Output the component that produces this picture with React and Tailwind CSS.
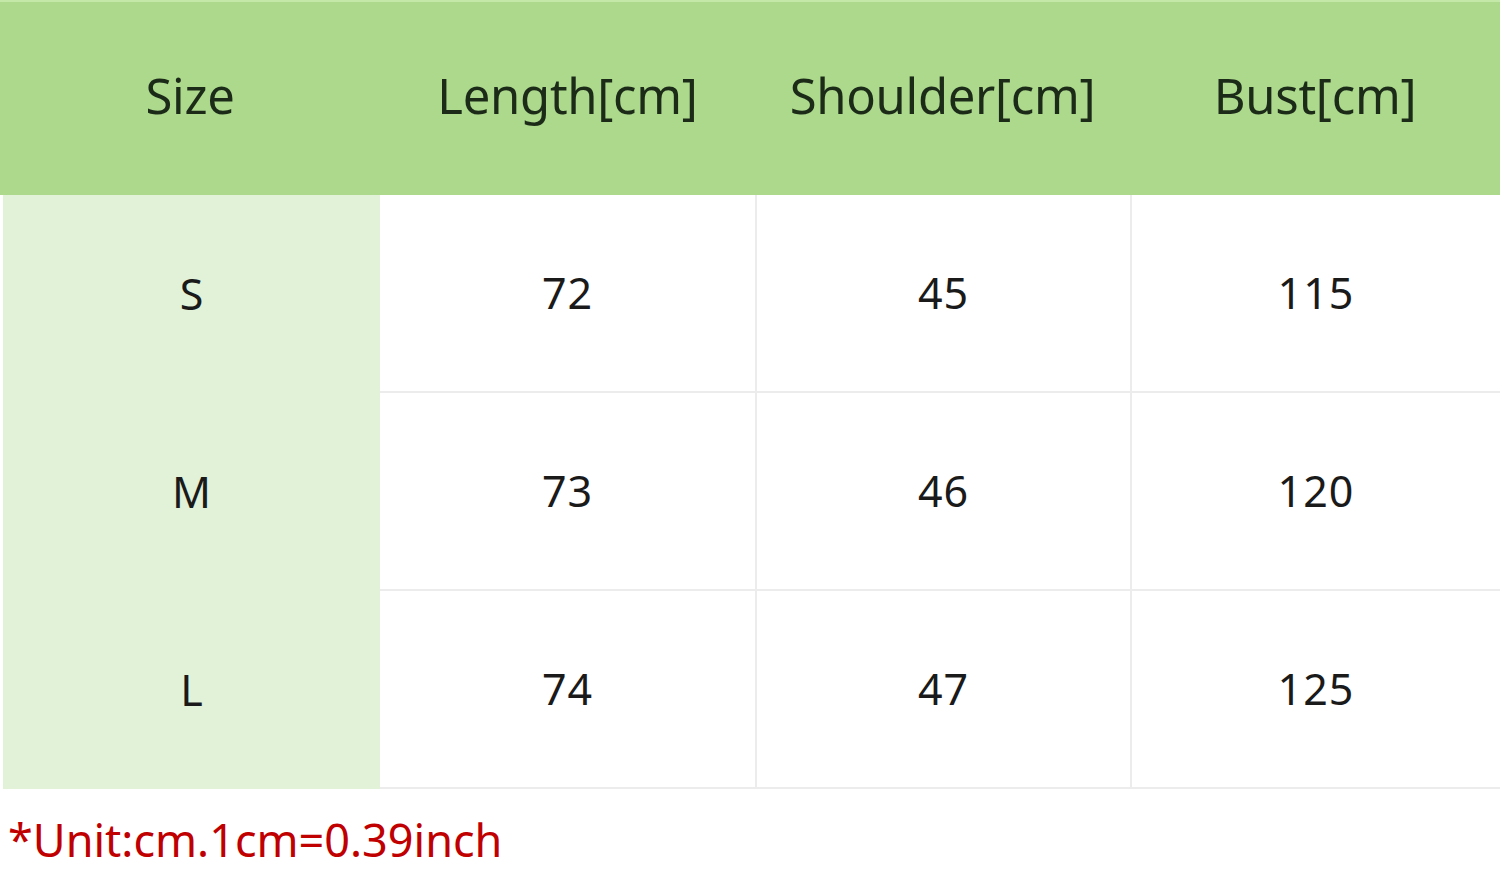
const headers = ["Size", "Length[cm]", "Shoulder[cm]", "Bust[cm]"];

const rows = [
  ["S", "72", "45", "115"],
  ["M", "73", "46", "120"],
  ["L", "74", "47", "125"],
];

const App = () => {
  return (
    <div
      className="w-[1500px] h-[871px] bg-white overflow-hidden"
      style={{ fontFamily: '"Noto Sans", "Open Sans", sans-serif' }}
    >
      <div className="grid grid-cols-[380px_375px_375px_370px] h-[195px] bg-[#acd98c] border-t-2 border-[#c4e8a8]">
        {headers.map((h) => (
          <div
            key={h}
            className="flex items-center justify-center pb-[6px] text-[49px] text-[#1c2a18] tracking-[-0.3px]"
          >
            {h}
          </div>
        ))}
      </div>
      <div>
        {rows.map((row) => (
          <div
            key={row[0]}
            className="grid grid-cols-[380px_375px_375px_370px] h-[198px]"
          >
            <div className="flex items-center justify-center bg-[#e1f2d9] text-[43px] text-[#1a1a1a] ml-[3px]">
              {row[0]}
            </div>
            {row.slice(1).map((v, i) => (
              <div
                key={i}
                className={`flex items-center justify-center text-[43px] tracking-[1px] text-[#1a1a1a] border-b-2 border-[#ececec] ${
                  i > 0 ? "border-l-2" : ""
                }`}
              >
                {v}
              </div>
            ))}
          </div>
        ))}
      </div>
      <div className="pl-[8px] pt-[24px] text-[45px] leading-[1.2] text-[#c00000]">
        *Unit:cm.1cm=0.39inch
      </div>
    </div>
  );
};

export default App;
